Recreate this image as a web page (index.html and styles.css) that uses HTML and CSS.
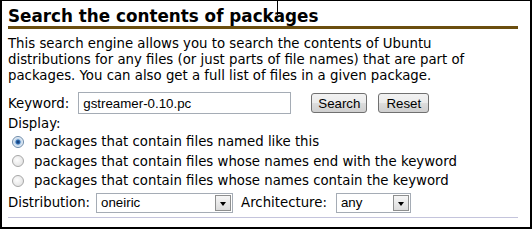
FILE: index.html
```html
<!DOCTYPE html>
<html lang="en">

<head>
  <meta charset="UTF-8">
  <title>Search the contents of packages</title>
  <link rel="stylesheet" href="styles.css">
</head>

<body>
  <div class="frame">
    <span class="cursor"></span>
    <h1>Search the contents of packages</h1>
    <p class="intro">This search engine allows you to search the contents of Ubuntu
      distributions for any files (or just parts of file names) that are part of
      packages. You can also get a full list of files in a given package.</p>
    <form class="search">
      <div class="row">
        <label for="keyword">Keyword:</label>
        <input type="text" id="keyword" class="text" value="gstreamer-0.10.pc">
        <button type="submit" class="btn btn-search">Search</button>
        <button type="reset" class="btn btn-reset">Reset</button>
      </div>
      <div class="label">Display:</div>
      <div class="opt"><input type="radio" name="mode" checked><span>packages that contain files named like this</span></div>
      <div class="opt"><input type="radio" name="mode"><span>packages that contain files whose names end with the keyword</span></div>
      <div class="opt"><input type="radio" name="mode"><span>packages that contain files whose names contain the keyword</span></div>
      <div class="row row-sel">
        <label>Distribution:</label>
        <span class="sel sel-dist"><select><option>oneiric</option></select><i class="arrow"></i></span>
        <label class="arch">Architecture:</label>
        <span class="sel sel-arch"><select><option>any</option></select><i class="arrow"></i></span>
      </div>
    </form>
    <hr>
  </div>
</body>

</html>
```

FILE: styles.css
```css
* {
	margin: 0;
	padding: 0;
	box-sizing: border-box;
}

body {
	background: #fff;
	font-family: "DejaVu Sans", Verdana, sans-serif;
	font-size: 13.3px;
	color: #000;
}

.frame {
	position: relative;
	width: 532px;
	height: 229px;
	border: 2px solid #000;
	border-top-width: 1px;
	padding: 5px 12px 0 6px;
}

.cursor {
	position: absolute;
	left: 275px;
	top: 0;
	width: 1px;
	height: 14px;
	background: #000;
}

h1 {
	font-size: 16.8px;
	font-weight: bold;
	line-height: 20px;
	border-bottom: 3px solid #6b4e0f;
}

.intro {
	line-height: 16px;
	margin-top: 7px;
}

.search {
	margin-top: 8px;
}

.row {
	display: flex;
	align-items: center;
	height: 22px;
}

.text {
	width: 213px;
	height: 22px;
	margin-left: 9px;
	border: 1px solid #a5acb5;
	padding: 0 4px;
	font-family: "Liberation Sans", Arial, sans-serif;
	font-size: 13.3px;
	outline: none;
}

.btn {
	height: 20px;
	padding: 0 6px;
	border: 1px solid #707070;
	border-radius: 3px;
	background: linear-gradient(#f2f2f2, #ebebeb 50%, #dddddd 51%, #cfcfcf);
	font-family: "Liberation Sans", Arial, sans-serif;
	font-size: 13.3px;
	color: #000;
}

.btn-search {
	margin-left: 20px;
}

.btn-reset {
	margin-left: 11px;
	padding: 0 7px;
}

.label {
	line-height: 16px;
	margin-top: 2px;
}

.opt {
	display: flex;
	align-items: center;
	height: 19.5px;
}

.opt input {
	appearance: none;
	width: 12px;
	height: 12px;
	margin: 0 10px 0 4px;
	border: 1px solid #a7a7a7;
	border-radius: 50%;
	background: radial-gradient(circle at 40% 40%, #fdfdfd, #dcdcdc);
}

.opt input:checked {
	border-color: #6c8aa8;
	background: radial-gradient(circle, #0b2a63 0, #2e6fb5 2px, #bcd3ea 3px, #eef3f9 5px);
}

.row-sel {
	margin-top: 2px;
	height: 20px;
}

.sel {
	position: relative;
	display: inline-block;
	height: 20px;
	margin-left: 6px;
}

.sel select {
	appearance: none;
	width: 100%;
	height: 20px;
	border: 1px solid #a5acb5;
	background: #fff;
	padding: 0 4px;
	font-family: "Liberation Sans", Arial, sans-serif;
	font-size: 13.3px;
	color: #000;
}

.sel .arrow {
	position: absolute;
	right: 2px;
	top: 2px;
	width: 16px;
	height: 16px;
	border: 1px solid #8e8f8f;
	background: linear-gradient(#f6f6f6, #dcdcdc);
}

.sel .arrow::after {
	content: "";
	position: absolute;
	left: 4px;
	top: 6px;
	border-left: 3px solid transparent;
	border-right: 3px solid transparent;
	border-top: 4px solid #000;
}

.sel-dist {
	width: 137px;
}

.sel-arch {
	width: 75px;
	margin-left: 9px;
}

.arch {
	margin-left: 8px;
}

hr {
	margin-top: 4px;
	border: 0;
	border-top: 1px solid #c4c4dc;
}
```
